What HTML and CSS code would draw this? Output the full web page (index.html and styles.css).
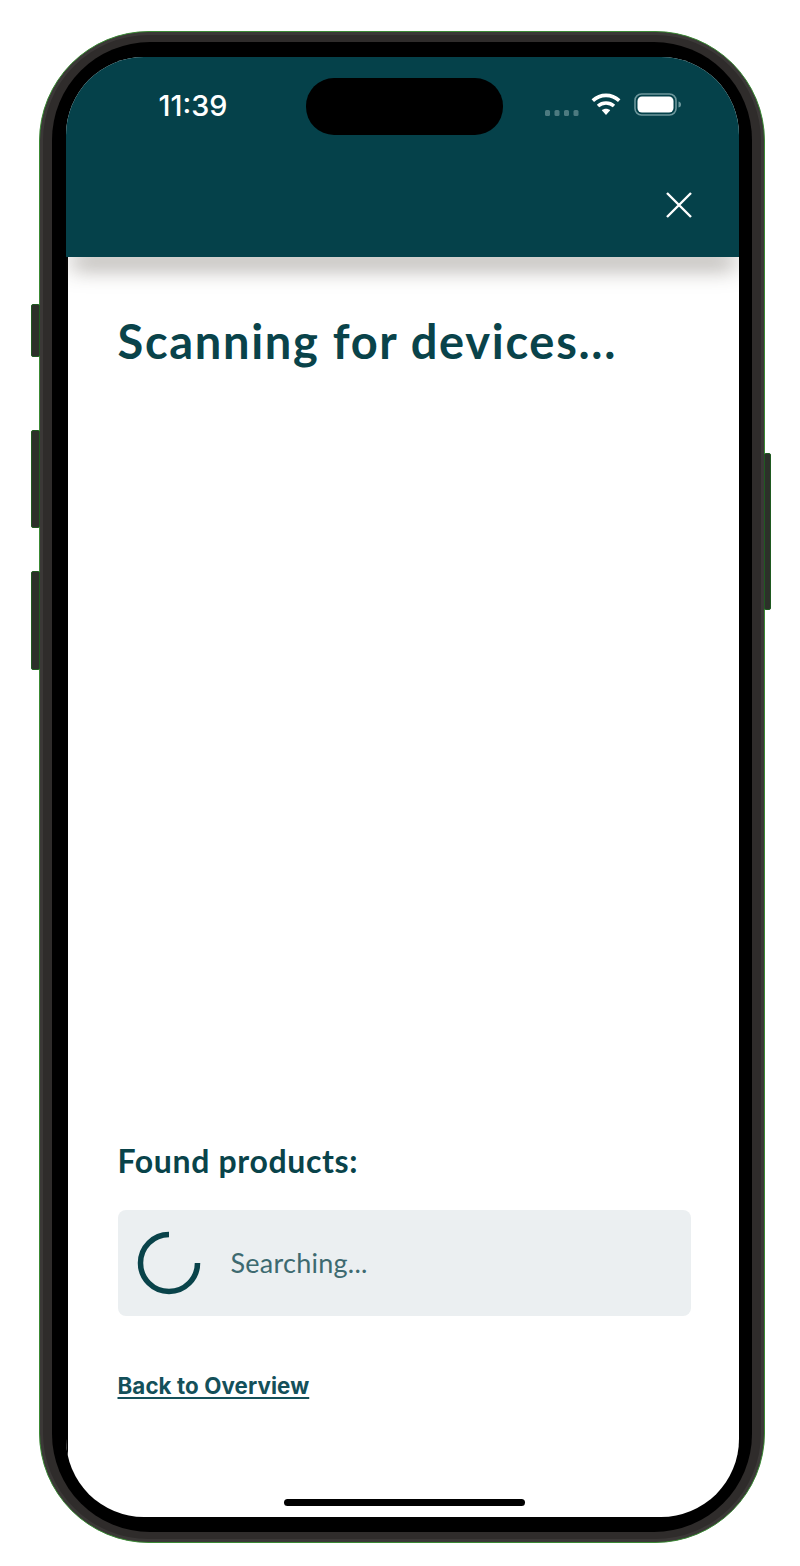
FILE: index.html
```html
<!DOCTYPE html>
<html lang="en">
<head>
<meta charset="utf-8">
<title>Scanning for devices</title>
<link rel="stylesheet" href="styles.css">
</head>
<body>
<div class="phone">
  <span class="side-btn btn-a"></span>
  <span class="side-btn btn-b"></span>
  <span class="side-btn btn-c"></span>
  <span class="side-btn btn-d"></span>
  <div class="bezel">
    <div class="screen">
      <span class="island"></span>
      <header class="header">
        <div class="status">
          <span class="time">11:39</span>
          <div class="status-icons">
            <svg class="signal" viewBox="0 0 34 6" aria-hidden="true"><g fill="#4d7a80"><rect x="0" y="0" width="5" height="6" rx="1.5"/><rect x="9.500" y="0" width="5" height="6" rx="1.500"/><rect x="19" y="0" width="5" height="6" rx="1.500"/><rect x="28.500" y="0" width="5" height="6" rx="1.500"/></g></svg>
            <svg class="wifi" viewBox="0 0 30 24" aria-hidden="true"><g fill="none" stroke="#fff" stroke-width="3.600"><path d="M1.800 8.600C9.400 1.600 20.600 1.600 28.200 8.600"/><path d="M7 14C11.600 10 18.400 10 23 14"/></g><path d="M10.800 18.200C13.300 16.200 16.700 16.200 19.200 18.200L15 23Z" fill="#fff"/></svg>
            <svg class="battery" viewBox="0 0 48 23" aria-hidden="true"><rect x="1" y="1" width="41" height="21" rx="6.500" fill="none" stroke="#6d979c" stroke-width="1.600"/><rect x="3.500" y="3.500" width="36" height="16" rx="4.500" fill="#fff"/><path d="M44.500 8.500C46.500 9 47 10 47 11.500S46.500 14 44.500 14.500Z" fill="#6d979c"/></svg>
          </div>
        </div>
        <div class="close-row">
          <svg class="close" viewBox="0 0 26 26" aria-hidden="true"><path d="M1 1L25 25M25 1L1 25" fill="none" stroke="#fff" stroke-width="2.400"/></svg>
        </div>
      </header>
      <main class="body">
        <h1 class="title">Scanning for devices...</h1>
        <section class="found">
          <h2 class="found-title">Found products:</h2>
          <div class="card">
            <svg class="spinner" viewBox="0 0 64 64" aria-hidden="true"><path d="M32 3.500A28.500 28.500 0 1 0 60.500 32" fill="none" stroke="#09434a" stroke-width="5.500"/></svg>
            <span class="searching">Searching...</span>
          </div>
          <a class="back" href="#">Back to Overview</a>
        </section>
        <div class="home-bar"></div>
      </main>
    </div>
  </div>
</div>
</body>
</html>
```
FILE: styles.css
```css
* { box-sizing: border-box; }
html, body { margin: 0; background: #fff; }
body { padding: 31px 35px 0 39px; height: 1566px; overflow: hidden; }

.phone {
  position: relative;
  width: 726px;
  height: 1512px;
  padding: 10px 12px;
  border: 1.500px solid #3a8a34;
  border-radius: 110px;
  background: #2f2c2b;
  box-shadow: inset 0 0 0 3px #3b3837;
}
.side-btn {
  position: absolute;
  width: 9px;
  background: #2c3029;
  border: 1px solid #1f5a20;
  border-radius: 2px;
}
.btn-a { left: -9px; top: 272px; height: 53px; }
.btn-b { left: -9px; top: 398px; height: 98px; }
.btn-c { left: -9px; top: 539px; height: 99px; }
.btn-d { right: -7px; top: 421px; height: 157px; width: 7px; }

.bezel {
  height: 100%;
  padding: 14.500px 13.500px 15px 13.500px;
  border-radius: 98px;
  background: #000;
}
.screen {
  position: relative;
  display: flex;
  flex-direction: column;
  height: 100%;
  overflow: hidden;
  border-radius: 78px;
  background: #fff;
}
.island {
  position: absolute;
  z-index: 2;
  left: 240px;
  top: 21px;
  width: 197px;
  height: 57px;
  border-radius: 28px;
  background: #000;
}

.header {
  position: relative;
  z-index: 1;
  height: 200px;
  flex: none;
  background: #05414a;
}
.status {
  display: flex;
  align-items: flex-start;
  justify-content: space-between;
  padding: 33px 57px 0 93px;
  height: 133px;
}
.time {
  font: 500 28.800px/32px Inter, sans-serif;
  color: #fff;
}
.status-icons { display: flex; align-items: flex-start; margin-top: -1px; }
.signal { width: 34px; height: 6px; margin-top: 21px; }
.wifi { width: 30px; height: 24px; margin: 3px 13px 0 12px; }
.battery { width: 48px; height: 23px; margin-top: 4px; }
.close-row { display: flex; justify-content: flex-end; padding-right: 47px; }
.close { width: 26px; height: 26px; margin-top: 2px; }

.body {
  position: relative;
  display: flex;
  flex: 1;
  flex-direction: column;
  border-left: 2px solid #000;
  padding: 0 48px 0 50px;
}
.body::before {
  content: "";
  position: absolute;
  left: 4px;
  right: 4px;
  top: -12px;
  height: 12px;
  box-shadow: 0 10px 22px rgba(70, 62, 52, .6);
}
.title {
  margin: 57px 0 0;
  font: 700 47px/54px Lato, sans-serif;
  letter-spacing: 1.700px;
  color: #09434a;
}
.found { margin-top: auto; }
.found-title {
  margin: 0 0 31px;
  font: 700 32px/36px Lato, sans-serif;
  letter-spacing: .650px;
  color: #09434a;
}
.card {
  display: flex;
  align-items: center;
  gap: 30px;
  height: 106px;
  padding: 0 19px;
  border-radius: 8px;
  background: #ebeff1;
}
.spinner { width: 64px; height: 64px; flex: none; }
.searching {
  font: 400 27px/32px Lato, sans-serif;
  letter-spacing: .250px;
  color: #3d6a70;
}
.back {
  display: block;
  width: max-content;
  margin-top: 56px;
  font: 700 22.300px/28px Inter, sans-serif;
  letter-spacing: .100px;
  color: #14505a;
  text-decoration: underline;
  text-underline-offset: 3px;
}
.home-bar {
  flex: none;
  align-self: center;
  width: 241px;
  height: 7px;
  margin: 99.500px 0 11px;
  border-radius: 4px;
  background: #000;
}
```
